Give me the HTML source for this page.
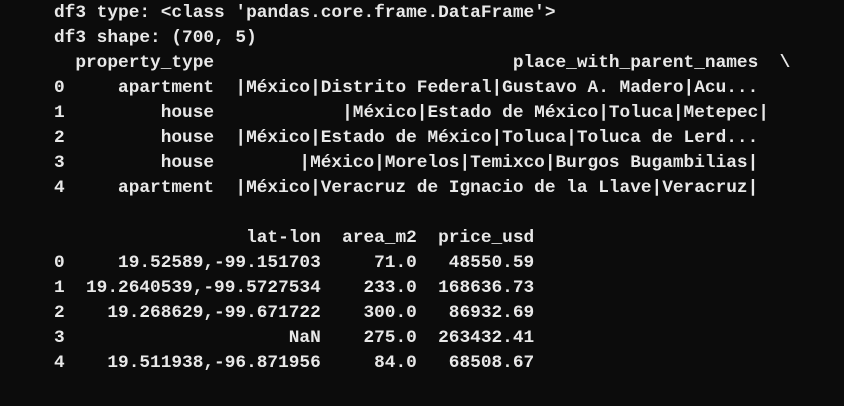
<!DOCTYPE html>
<html><head><meta charset="utf-8"><style>
html,body{margin:0;padding:0;background:#0c0c0c;width:844px;height:406px;overflow:hidden}
pre{position:absolute;left:54px;top:1px;margin:0;font-family:"Liberation Mono",monospace;font-size:17.8px;font-weight:bold;line-height:25px;color:#e8e8e8;white-space:pre}
</style></head><body><pre>df3 type: &lt;class 'pandas.core.frame.DataFrame'&gt;
df3 shape: (700, 5)
  property_type                            place_with_parent_names  \
0     apartment  |México|Distrito Federal|Gustavo A. Madero|Acu...
1         house            |México|Estado de México|Toluca|Metepec|
2         house  |México|Estado de México|Toluca|Toluca de Lerd...
3         house        |México|Morelos|Temixco|Burgos Bugambilias|
4     apartment  |México|Veracruz de Ignacio de la Llave|Veracruz|

                  lat-lon  area_m2  price_usd
0     19.52589,-99.151703     71.0   48550.59
1  19.2640539,-99.5727534    233.0  168636.73
2    19.268629,-99.671722    300.0   86932.69
3                     NaN    275.0  263432.41
4    19.511938,-96.871956     84.0   68508.67</pre></body></html>
